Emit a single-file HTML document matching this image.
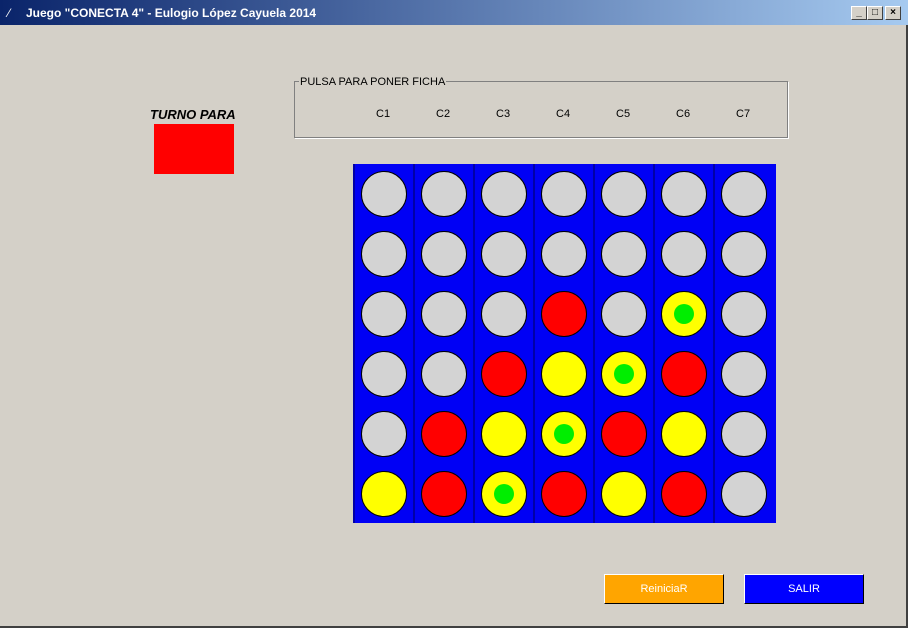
<!DOCTYPE html>
<html><head><meta charset="utf-8"><style>
body{margin:0;width:908px;height:628px;background:#d4d0c8;position:relative;overflow:hidden;font-family:"Liberation Sans",sans-serif}
.a{position:absolute}
.title{left:0;top:0;width:908px;height:25px;background:linear-gradient(90deg,#0a246a,#a6caf0);}
.title span{position:absolute;left:26px;top:6px;color:#fff;font-weight:bold;font-size:12px}
.wb{top:6px;width:14px;height:12px;background:#d4d0c8;border:1px solid;border-color:#fff #404040 #404040 #fff;font-size:10px;font-weight:bold;text-align:center;line-height:12px}
.col{top:164px;width:58px;height:359px;background:#0000f5;border-left:2px solid #0000a8}
.c{width:44px;height:44px;border-radius:50%;border:1px solid #000;box-sizing:content-box}
.g{background:#d3d3d3}.r{background:#ff0000}.y{background:#ffff00}
.dot{position:absolute;left:12px;top:12px;width:20px;height:20px;border-radius:50%;background:#00ee00}
.lbl{top:108px;font-size:11px;color:#000}
.btn{top:574px;width:118px;height:28px;border:1px solid;border-color:#fff #000 #000 #fff;color:#fff;font-size:11px;text-align:center;line-height:28px}
</style></head><body>
<div class="a title"><span>Juego "CONECTA 4" - Eulogio López Cayuela 2014</span><span style="left:8px;font-weight:normal">⁄</span></div>
<div class="a wb" style="left:851px">_</div><div class="a wb" style="left:867px">□</div><div class="a wb" style="left:885px">×</div>
<div class="a" style="left:0;top:25px;width:906px;height:601px;border-right:2px solid #404040;border-bottom:2px solid #404040"></div>
<div class="a" style="left:150px;top:107px;font-size:13px;font-weight:bold;font-style:italic">TURNO PARA</div>
<div class="a" style="left:154px;top:124px;width:80px;height:50px;background:#f00"></div>
<div class="a" style="left:294px;top:81px;width:492px;height:55px;border:1px solid #808080;box-shadow:1px 1px 0 #fff"></div>
<div class="a" style="left:299px;top:76px;font-size:11px;background:#d4d0c8;padding:0 1px">PULSA PARA PONER FICHA</div>
<div class="a lbl" style="left:376px">C1</div><div class="a lbl" style="left:436px">C2</div><div class="a lbl" style="left:496px">C3</div><div class="a lbl" style="left:556px">C4</div><div class="a lbl" style="left:616px">C5</div><div class="a lbl" style="left:676px">C6</div><div class="a lbl" style="left:736px">C7</div>
<div class="a col" style="left:353px"></div><div class="a col" style="left:413px"></div><div class="a col" style="left:473px"></div><div class="a col" style="left:533px"></div><div class="a col" style="left:593px"></div><div class="a col" style="left:653px"></div><div class="a col" style="left:713px;width:61px"></div>
<div id="b"></div>
<script>
var rows=["ggggggg","ggggggg","gggrgYg","ggryYrg","gryYryg","yrYryrg"];
var h="";
for(var j=0;j<6;j++)for(var i=0;i<7;i++){var ch=rows[j][i];var cl=ch.toLowerCase();
h+='<div class="a c '+cl+'" style="left:'+(361+60*i)+'px;top:'+(171+60*j)+'px">'+(ch=="Y"?'<div class="dot"></div>':'')+'</div>';}
document.getElementById("b").innerHTML=h;
</script>
<div class="a btn" style="left:604px;background:#ffa500">ReiniciaR</div>
<div class="a btn" style="left:744px;background:#0000ff">SALIR</div>
</body></html>
